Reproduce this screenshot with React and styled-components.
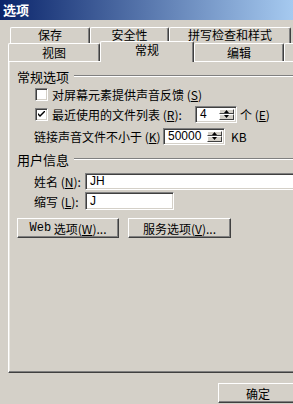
import styled, { createGlobalStyle } from "styled-components";

const FACE = '#d4d0c8'
const SHADOW = '#808080'
const DARK = '#404040'

const GlobalStyle = createGlobalStyle`
  html, body {
    margin: 0;
    padding: 0;
    background: ${FACE};
    overflow: hidden;
  }
  body {
    font-family: "Noto Sans CJK SC", "Liberation Sans", sans-serif;
    font-size: 12px;
    color: #000;
  }
`

const Window = styled.div`
  width: 293px;
  height: 404px;
  background: ${FACE};
  overflow: hidden;
`

const TitleBar = styled.div`
  height: 20px;
  background: linear-gradient(to right, #0a246a, #a6caf0);
  color: #fff;
  font-weight: bold;
  font-size: 13px;
  line-height: 20px;
  padding-left: 3px;
`

const Body = styled.div`
  padding: 7px 0 0 8px;
  width: 320px;
`

const TabRow = styled.div`
  display: flex;
  align-items: flex-end;
  margin-left: ${({ $indent }) => $indent || 0}px;
  height: ${({ $height }) => $height}px;
`

const Tab = styled.div`
  box-sizing: border-box;
  width: ${({ $w }) => $w}px;
  height: ${({ $active, $h }) => ($active ? $h + 3 : $h)}px;
  border-top: 1px solid #fff;
  border-left: 1px solid #fff;
  border-right: 1px solid ${DARK};
  box-shadow: inset -1px 0 ${SHADOW};
  border-radius: 2px 2px 0 0;
  background: ${FACE};
  display: flex;
  justify-content: center;
  align-items: flex-start;
  padding-top: ${({ $pt }) => $pt}px;
  font-size: 12px;
  position: relative;
  z-index: ${({ $active }) => ($active ? 2 : 1)};
  margin-bottom: ${({ $active }) => ($active ? -1 : 0)}px;
  flex-shrink: 0;
`

const TabText = styled.span`
  line-height: 12px;
  height: 12px;
`

const Panel = styled.div`
  box-sizing: border-box;
  width: 310px;
  height: 312px;
  border-top: 1px solid #fff;
  border-left: 1px solid #fff;
  border-bottom: 1px solid ${DARK};
  box-shadow: inset 0 -1px ${SHADOW}, inset 1px 0 #e8e6e0;
  padding: 6px 0 0 8px;
`

const GroupHeader = styled.div`
  display: flex;
  align-items: center;
  height: 16px;
  margin-top: ${({ $mt }) => $mt || 0}px;
  gap: 5px;
  font-size: 13px;
`

const GroupLine = styled.div`
  flex: 1;
  height: 0;
  border-top: 1px solid ${SHADOW};
  border-bottom: 1px solid #fff;
`

const Row = styled.div`
  display: flex;
  align-items: center;
  height: 20px;
  padding-left: ${({ $indent }) => $indent}px;
  margin-top: ${({ $mt }) => $mt || 0}px;
  font-size: 12px;
  white-space: nowrap;
`

const Check = styled.div`
  box-sizing: border-box;
  width: 13px;
  height: 13px;
  background: #fff;
  border-top: 1px solid ${SHADOW};
  border-left: 1px solid ${SHADOW};
  border-right: 1px solid #fff;
  border-bottom: 1px solid #fff;
  box-shadow: inset 1px 1px ${DARK}, inset -1px -1px ${FACE};
  margin-right: 4px;
  display: flex;
  align-items: center;
  justify-content: center;
  flex-shrink: 0;
`

const Label = styled.span`
  display: inline-block;
  width: ${({ $w }) => ($w ? `${$w}px` : 'auto')};
  margin-left: ${({ $ml }) => $ml || 0}px;
  flex-shrink: 0;
`

const Field = styled.div`
  box-sizing: border-box;
  display: flex;
  width: ${({ $w }) => $w}px;
  height: ${({ $h }) => $h || 18}px;
  background: #fff;
  border-top: 1px solid ${SHADOW};
  border-left: 1px solid ${SHADOW};
  border-right: 1px solid #fff;
  border-bottom: 1px solid #fff;
  box-shadow: inset 1px 1px ${DARK}, inset -1px -1px ${FACE};
  flex-shrink: 0;
`

const FieldText = styled.div`
  flex: 1;
  padding-left: 4px;
  line-height: ${({ $lh }) => $lh || 16}px;
  font-family: "Liberation Sans", "Noto Sans CJK SC", sans-serif;
  font-size: 12px;
`

const SpinButtons = styled.div`
  display: flex;
  flex-direction: column;
  width: 15px;
  margin: 2px 2px 2px 0;
`

const SpinButton = styled.div`
  flex: 1;
  box-sizing: border-box;
  background: ${FACE};
  border-top: 1px solid #fff;
  border-left: 1px solid #fff;
  border-right: 1px solid ${DARK};
  border-bottom: 1px solid ${DARK};
  display: flex;
  align-items: center;
  justify-content: center;
`

const Buttons = styled.div`
  display: flex;
  gap: 9px;
  margin-top: 7px;
`

const Button = styled.div`
  box-sizing: border-box;
  width: ${({ $w }) => $w}px;
  height: 20px;
  background: ${FACE};
  border-top: 1px solid #fff;
  border-left: 1px solid #fff;
  border-right: 1px solid ${DARK};
  border-bottom: 1px solid ${DARK};
  box-shadow: inset -1px -1px ${SHADOW};
  display: flex;
  align-items: center;
  justify-content: center;
  font-size: 12px;
  white-space: nowrap;
`

const Mono = styled.span`
  font-family: "Liberation Mono", monospace;
  font-size: 12px;
`

const Footer = styled.div`
  display: flex;
  padding: 10px 0 0 210px;
`

const Arrow = ({ up }) => (
  <svg width="5" height="3" viewBox="0 0 5 3">
    <path d={up ? "M2.5 0 L5 3 L0 3 Z" : "M0 0 L5 0 L2.5 3 Z"} fill="#000" />
  </svg>
)

const Spin = ({ w, value }) => (
  <Field $w={w} $h={17}>
    <FieldText $lh={15}>{value}</FieldText>
    <SpinButtons>
      <SpinButton><Arrow up /></SpinButton>
      <SpinButton><Arrow /></SpinButton>
    </SpinButtons>
  </Field>
)

const CheckBox = ({ checked }) => (
  <Check>
    {checked && (
      <svg width="7" height="7" viewBox="0 0 7 7">
        <path d="M0 2 L0 4 L2 6 L7 1 L7 -1 L2 4 Z" fill="#000" />
      </svg>
    )}
  </Check>
)

export default function App() {
  return (
    <Window>
      <GlobalStyle />
      <TitleBar>选项</TitleBar>
      <Body>
        <TabRow $indent={2} $height={16}>
          <Tab $w={80} $h={16} $pt={1}><TabText>保存</TabText></Tab>
          <Tab $w={79} $h={16} $pt={1}><TabText>安全性</TabText></Tab>
          <Tab $w={122} $h={16} $pt={1}><TabText>拼写检查和样式</TabText></Tab>
        </TabRow>
        <TabRow $height={18}>
          <Tab $w={92} $h={18} $pt={3}><TabText>视图</TabText></Tab>
          <Tab $w={94} $h={18} $pt={2} $active><TabText>常规</TabText></Tab>
          <Tab $w={90} $h={18} $pt={3}><TabText>编辑</TabText></Tab>
          <Tab $w={40} $h={18} $pt={3}></Tab>
        </TabRow>
        <Panel>
          <GroupHeader>常规选项<GroupLine /></GroupHeader>
          <Row $indent={18}>
            <CheckBox />
            对屏幕元素提供声音反馈 (<u>S</u>)
          </Row>
          <Row $indent={18}>
            <CheckBox checked />
            <Label $w={143}>最近使用的文件列表 (<u>R</u>):</Label>
            <Spin w={42} value="4" />
            <Label $ml={3}>个 (<u>E</u>)</Label>
          </Row>
          <Row $indent={17} $mt={2}>
            <Label $w={129}>链接声音文件不小于 (<u>K</u>)</Label>
            <Spin w={62} value="50000" />
            <Label $ml={6}>KB</Label>
          </Row>
          <GroupHeader $mt={5}>用户信息<GroupLine /></GroupHeader>
          <Row $indent={17} $mt={4}>
            <Label $w={51}>姓名 (<u>N</u>):</Label>
            <Field $w={240} $h={17}><FieldText $lh={15}>JH</FieldText></Field>
          </Row>
          <Row $indent={17}>
            <Label $w={51}>缩写 (<u>L</u>):</Label>
            <Field $w={89}><FieldText>J</FieldText></Field>
          </Row>
          <Buttons>
            <Button $w={102}><Mono>Web</Mono>&nbsp;选项(<u>W</u>)...</Button>
            <Button $w={103}>服务选项(<u>V</u>)...</Button>
          </Buttons>
        </Panel>
        <Footer>
          <Button $w={80}>确定</Button>
        </Footer>
      </Body>
    </Window>
  )
}
